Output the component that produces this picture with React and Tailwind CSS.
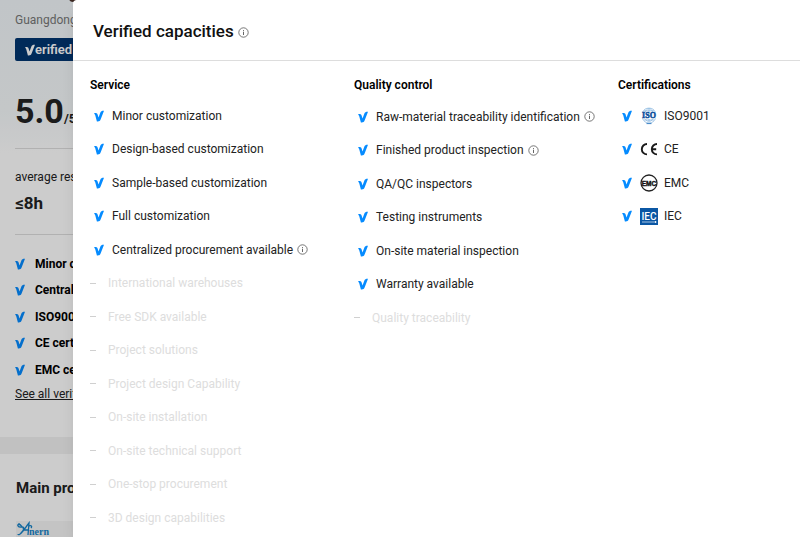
import React from "react";

const services = [
  { name: "Minor customization", has: true },
  { name: "Design-based customization", has: true },
  { name: "Sample-based customization", has: true },
  { name: "Full customization", has: true },
  { name: "Centralized procurement available", has: true, info: true },
  { name: "International warehouses" },
  { name: "Free SDK available" },
  { name: "Project solutions" },
  { name: "Project design Capability" },
  { name: "On-site installation" },
  { name: "On-site technical support" },
  { name: "One-stop procurement" },
  { name: "3D design capabilities" },
];

const quality = [
  { name: "Raw-material traceability identification", has: true, info: true },
  { name: "Finished product inspection", has: true, info: true },
  { name: "QA/QC inspectors", has: true },
  { name: "Testing instruments", has: true },
  { name: "On-site material inspection", has: true },
  { name: "Warranty available", has: true },
  { name: "Quality traceability" },
];

const Tick = ({ className }) => (
  <svg viewBox="0 0 10 12" className={className} aria-hidden="true">
    <path
      d="M0 3.4C1.6 2.7 3.1 3 3.6 4.600L4.500 7.400L6.400 2.400C6.900 1 8.100 0.600 10 0.700L6.800 9C6 11.200 5 11.600 2.900 11.400L1.300 5.600C1.100 4.600 0.800 3.900 0 3.400Z"
      fill="currentColor"
    />
  </svg>
);

const InfoIcon = () => (
  <svg viewBox="0 0 11 11" className="h-[11px] w-[11px] shrink-0 text-[#555]" aria-hidden="true">
    <circle cx="5.5" cy="5.5" r="4.7" fill="none" stroke="currentColor" strokeWidth="0.8" />
    <path d="M5.5 4.7V8M5.5 3v0.9" stroke="currentColor" strokeWidth="0.9" />
  </svg>
);

const IsoLogo = () => (
  <svg viewBox="0 0 18 18" className="h-[18px] w-[18px]" aria-hidden="true">
    <g fill="none" stroke="#7fb0dc" strokeWidth="0.7">
      <path d="M2.5 5.5A7 7 0 0 1 15.5 5.5M2.5 11.500A7 7 0 0 0 15.5 11.500" />
      <path d="M5.5 5C6 3 7 1.700 9 1.700S12 3 12.500 5M5.500 12C6 13.500 7 14.300 9 14.300S12 13.500 12.500 12M9 1.700V5M9 12V14M4 3.800H14M4 13H14" />
    </g>
    <text x="9" y="11.200" textAnchor="middle" fontFamily="Liberation Serif, serif" fontSize="8" fontWeight="700" fill="#0b4f9c" stroke="#0b4f9c" strokeWidth="0.5">
      ISO
    </text>
    <path d="M6.500 16.600H11.500" stroke="#3b82c4" strokeWidth="1" />
  </svg>
);

const CeLogo = () => (
  <svg viewBox="0 0 18 18" className="h-[18px] w-[18px]" aria-hidden="true">
    <g fill="none" stroke="#1a1a1a" strokeWidth="1.9">
      <path d="M7 4A5.200 5.200 0 1 0 7 14.400" />
      <path d="M17 4A5.200 5.200 0 1 0 17 14.400M11 9.200H16.200" />
    </g>
  </svg>
);

const EmcLogo = () => (
  <svg viewBox="0 0 18 18" className="h-[18px] w-[18px]" aria-hidden="true">
    <circle cx="9" cy="9" r="8" fill="#fff" stroke="#222" strokeWidth="1.3" />
    <text x="9" y="11.500" textAnchor="middle" fontFamily="Liberation Sans, sans-serif" fontSize="6.500" fontWeight="700" fill="#111" stroke="#111" strokeWidth="0.4">
      EMC
    </text>
  </svg>
);

const IecLogo = () => (
  <svg viewBox="0 0 18 18" className="h-[18px] w-[18px]" aria-hidden="true">
    <rect y="1" width="18" height="17" fill="#0b57a4" />
    <text x="9" y="12.500" textAnchor="middle" fontFamily="Roboto, sans-serif" fontSize="10" fontWeight="500" fill="#fff">
      IEC
    </text>
    <path d="M2 15H14.500" stroke="#cfe0f2" strokeWidth="0.8" />
    <circle cx="15.500" cy="15" r="0.900" fill="#fff" />
  </svg>
);

const certifications = [
  { name: "ISO9001", Logo: IsoLogo },
  { name: "CE", Logo: CeLogo },
  { name: "EMC", Logo: EmcLogo },
  { name: "IEC", Logo: IecLogo },
];

const Item = ({ item }) => (
  <li className="flex h-[33px] items-center even:h-[34px]">
    {item.has ? (
      <>
        <Tick className="ml-1 mr-2 h-3 w-[10px] text-[#058bff]" />
        <span className="mr-1 whitespace-nowrap text-[#222]">{item.name}</span>
        {item.info && <InfoIcon />}
      </>
    ) : (
      <>
        <span className="mr-3 h-px w-[6px] bg-[#d0d0d0]" />
        <span className="whitespace-nowrap text-[#ddd]">{item.name}</span>
      </>
    )}
  </li>
);

// Supplier page that sits dimmed behind the drawer
const SupplierPage = () => {
  const highlights = ["Minor c", "Central", "ISO900", "CE cert", "EMC ce"];

  return (
    <div className="h-full overflow-hidden whitespace-nowrap bg-white text-[#222]">
      <span className="absolute -top-[6px] left-[69px] h-2 w-2 rounded-full bg-[#4a3028]" />
      <section className="h-[437px] bg-linear-to-b from-[#f2f7fb] via-[#f5f9fb] via-25% to-white to-35% px-[15px] pt-3">
        <p className="text-xs leading-4 text-[#777]">Guangdong</p>
        <div className="mt-[10px] flex h-[23px] w-[90px] items-center rounded-xs bg-[#003570] pl-[10px] text-[13px] font-semibold text-white">
          <Tick className="h-3 w-[10px]" />
          erified
        </div>
        <div className="mt-[30px] flex h-10 items-baseline font-bold leading-10">
          <span className="text-[34px]">5.0</span>
          <span className="text-[13px]">/5</span>
        </div>
        <div className="mt-[17px] border-t border-[#dedede] pt-5">
          <p className="text-xs leading-4">average res</p>
          <p className="mt-2 text-[17px] font-bold leading-5">≤8h</p>
        </div>
        <div className="mt-[21px] border-t border-[#dedede] pt-[15px]">
          <ul className="text-xs font-bold text-black">
            {highlights.map((text) => (
              <li key={text} className="flex h-[27px] items-center gap-[10px] even:h-[26px]">
                <Tick className="h-3 w-[10px] shrink-0 text-[#058bff]" />
                {text}
              </li>
            ))}
          </ul>
          <a href="#verified" className="mt-[3px] block text-xs leading-4 underline">
            See all verif
          </a>
        </div>
      </section>
      <div className="h-[17px] bg-[#f2f2f2]" />
      <section className="px-4 pt-6">
        <h2 className="text-[15px] font-bold leading-5">Main pro</h2>
        <div className="mt-[23px] h-24 bg-[#f5f5f5]">
          <svg viewBox="0 0 34 16" className="h-4 w-[34px]" aria-hidden="true">
            <path
              d="M4 3C0 3 2 7 6 6C9 6 8 9 5 12C4 14 2 14 2 13M2 3C5 3 6 6 8 8M4 13C7 11 9 7 13 2L12 14M7 9H12M13 5C16 4 16 6 15 7"
              fill="none"
              stroke="#1783c8"
              strokeWidth="1.3"
            />
            <text x="13" y="14" fontFamily="Liberation Serif, serif" fontSize="10" fontWeight="700" fill="#1783c8">
              nern
            </text>
          </svg>
        </div>
      </section>
    </div>
  );
};

const App = () => {
  return (
    <div className="relative h-screen overflow-hidden font-['Roboto',sans-serif]">
      <SupplierPage />
      <div className="absolute inset-0 bg-black/20" />

      {/* Drawer */}
      <aside className="absolute inset-y-0 right-0 left-[73px] overflow-hidden rounded-tl-sm bg-white shadow-lg">
        <header className="flex h-[61px] items-center gap-1 border-b border-[#ddd] px-5 pt-1">
          <h1 className="text-[17px] font-medium text-[#111]">Verified capacities</h1>
          <button type="button" aria-label="About verified capacities">
            <InfoIcon />
          </button>
        </header>

        <div className="grid grid-cols-[264px_264px_1fr] px-[17px] pt-4 text-xs">
          <section>
            <h2 className="mb-[6px] font-semibold leading-4 text-black">Service</h2>
            <ul>
              {services.map((item) => (
                <Item key={item.name} item={item} />
              ))}
            </ul>
          </section>
          <section>
            <h2 className="mb-[7px] font-semibold leading-4 text-black">Quality control</h2>
            <ul>
              {quality.map((item) => (
                <Item key={item.name} item={item} />
              ))}
            </ul>
          </section>
          <section>
            <h2 className="mb-[6px] font-semibold leading-4 text-black">Certifications</h2>
            <ul>
              {certifications.map(({ name, Logo }) => (
                <li key={name} className="flex h-[33px] items-center even:h-[34px]">
                  <Tick className="ml-1 mr-2 h-3 w-[10px] text-[#058bff]" />
                  <Logo />
                  <span className="ml-[6px] text-[#222]">{name}</span>
                </li>
              ))}
            </ul>
          </section>
        </div>
      </aside>
    </div>
  );
};

export default App;
